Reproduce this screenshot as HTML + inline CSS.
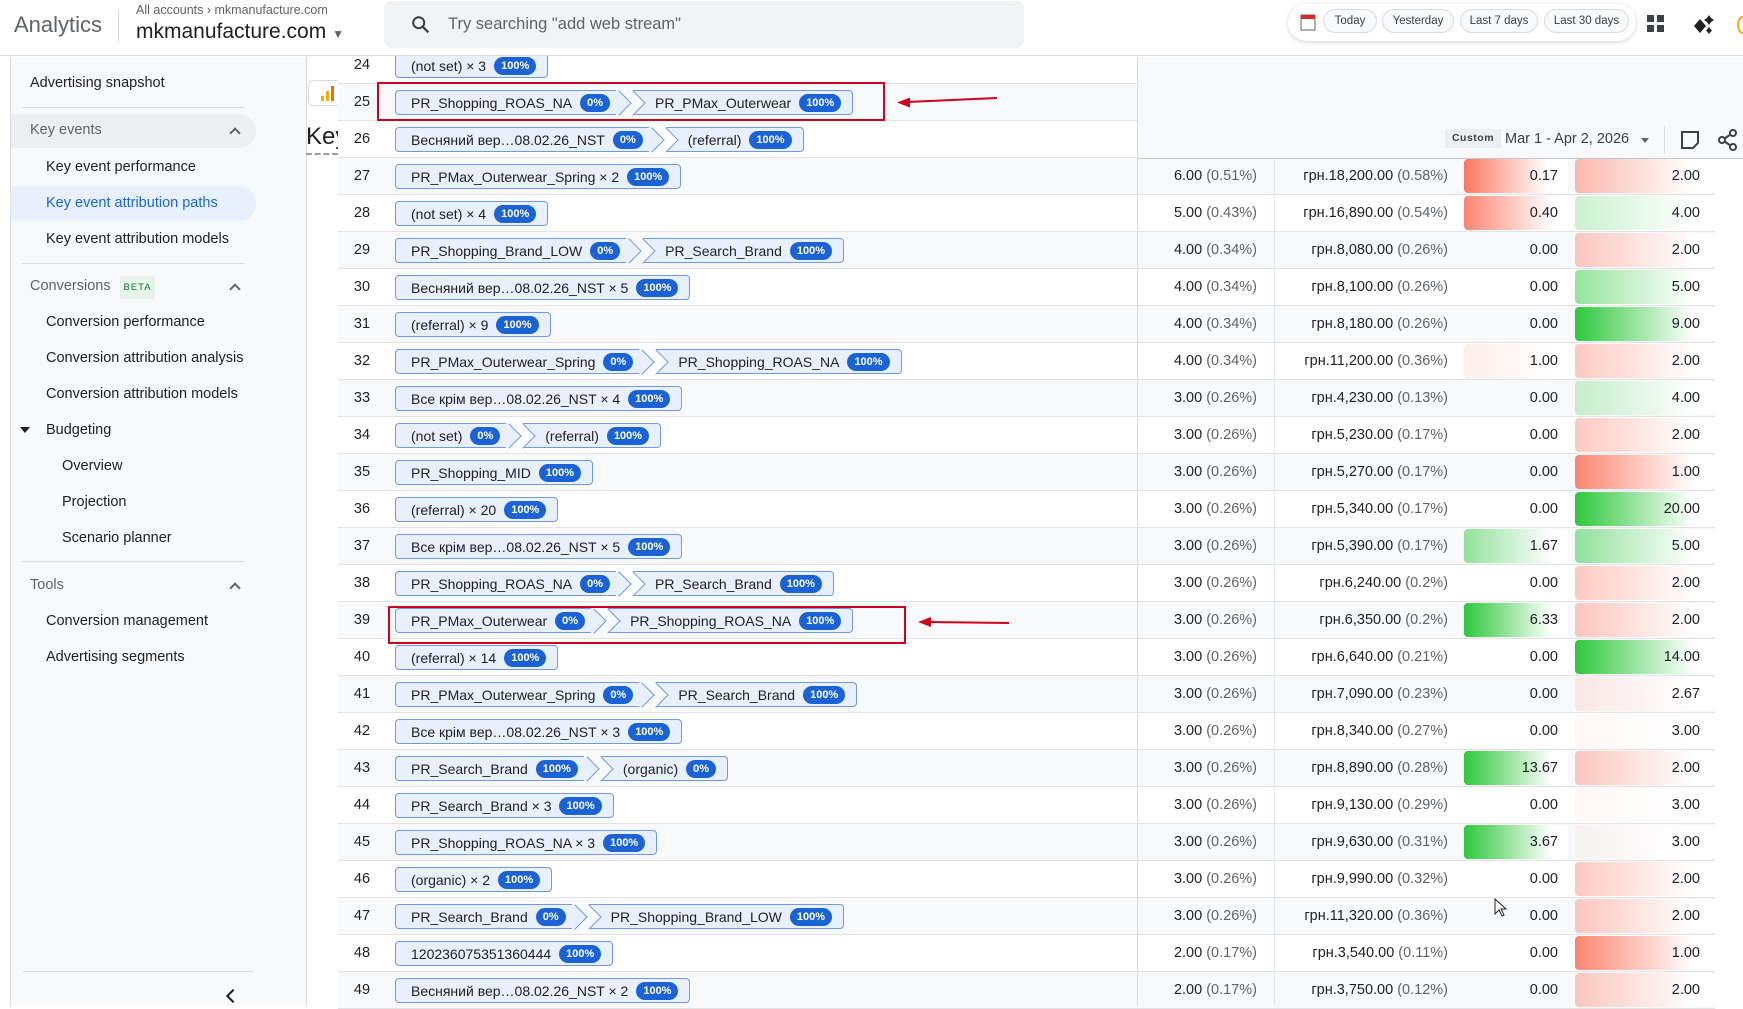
<!DOCTYPE html>
<html><head><meta charset="utf-8">
<style>
*{box-sizing:border-box;margin:0;padding:0}
body{width:1743px;height:1006px;overflow:hidden;position:relative;background:#fff;font-family:"Liberation Sans","Noto Sans CJK SC",sans-serif;color:#202124}
.abs{position:absolute}
#top{left:0;top:0;width:1743px;height:56px;background:#fff;border-bottom:1px solid #dadce0;z-index:5}
#side{left:10px;top:57px;width:297px;height:949px;background:#f8f9fa;border-left:1px solid #dadce0;border-right:1px solid #dadce0}
.si{position:absolute;font-size:14.5px;color:#202124;white-space:nowrap}
.sep{position:absolute;height:1px;background:#dadce0}
.chev{position:absolute;width:8px;height:8px;border-left:2px solid #5f6368;border-top:2px solid #5f6368;transform:rotate(45deg)}
.r{position:absolute;left:338px;width:1377px;height:37px;border-bottom:1px solid #e3e3e3;font-size:14.5px}
.r.g{background:#f8f9fa}
.n{position:absolute;left:0;width:48px;text-align:center;line-height:36px}
.p{position:absolute;left:57px;top:6px;height:25px;display:flex;white-space:nowrap}
.c{position:relative;display:inline-flex;align-items:center;height:25px;border:1px solid #6e9be6;background:#e8f0fe;border-radius:4px;padding:0 11px 0 15px;font-size:14px;color:#202124;white-space:nowrap}
.b{background:#1b62d4;color:#fff;font-weight:bold;font-size:11px;border-radius:10px;padding:2px 7px;margin-left:8px;line-height:14px;position:relative;z-index:2}
.f{border-right:none;border-radius:4px 0 0 4px;padding-right:6px}
.f::after{content:'';position:absolute;right:-12px;top:3px;width:17px;height:17px;transform:rotate(45deg);border-top:1px solid #6e9be6;border-right:1px solid #6e9be6;background:#e8f0fe;z-index:1}
.l{border-left:none;padding-left:22px;margin-left:17px;border-radius:0 4px 4px 0}
.l::before{content:'';position:absolute;left:-9px;top:3px;width:17px;height:17px;transform:rotate(45deg);border-top:1px solid #6e9be6;border-right:1px solid #6e9be6;background:#fff}
.g .l::before{background:#f8f9fa}
.v1,.v2{position:absolute;line-height:36px;white-space:nowrap}
.v1{right:458px}.v2{right:267px}
.q{color:#5f6368}
.h3,.h4{position:absolute;top:1px;height:34px;border-radius:4px;text-align:right;line-height:34px}
.h3{left:1126px;width:104px;padding-right:10px}
.h4{left:1237px;width:140px;padding-right:15px}
.pill{position:absolute;top:9px;height:24px;border:1px solid #dadce0;border-radius:12px;font-size:11.5px;color:#3c4043;text-align:center;line-height:22px;background:#f8f9fa}
</style></head><body>

<div id="top" class="abs">
  <div class="abs" style="left:14px;top:12px;font-size:22px;color:#5f6368">Analytics</div>
  <div class="abs" style="left:118px;top:9px;width:1px;height:34px;background:#dadce0"></div>
  <div class="abs" style="left:136px;top:3px;font-size:12.5px;color:#5f6368">All accounts › mkmanufacture.com</div>
  <div class="abs" style="left:136px;top:20px;font-size:21px;color:#202124">mkmanufacture.com <span style="font-size:12px;color:#5f6368">▼</span></div>
  <div class="abs" style="left:384px;top:1px;width:640px;height:47px;background:#f1f3f4;border-radius:8px">
    <svg class="abs" style="left:26px;top:13px" width="22" height="22" viewBox="0 0 24 24"><circle cx="9.5" cy="9.5" r="6" fill="none" stroke="#3c4043" stroke-width="2.2"/><path d="M14 14l6 6" stroke="#3c4043" stroke-width="2.4"/></svg>
    <div class="abs" style="left:64px;top:14px;font-size:16.5px;color:#5f6368">Try searching "add web stream"</div>
  </div>
  <div class="abs" style="left:1288px;top:4px;width:348px;height:37px;background:#fff;border-radius:19px;box-shadow:0 1px 4px rgba(0,0,0,.18)">
    <svg class="abs" style="left:12px;top:10px" width="16" height="17" viewBox="0 0 16 17"><rect x="1" y="1" width="14" height="15" fill="#fff" stroke="#5f6368"/><rect x="1" y="1" width="14" height="4" fill="#d93025"/></svg>
  </div>
  <div class="pill" style="left:1323px;width:54px;z-index:6">Today</div>
  <div class="pill" style="left:1382px;width:72px;z-index:6">Yesterday</div>
  <div class="pill" style="left:1460px;width:78px;z-index:6">Last 7 days</div>
  <div class="pill" style="left:1544px;width:85px;z-index:6">Last 30 days</div>
  <svg class="abs" style="left:1647px;top:15px" width="18" height="18" viewBox="0 0 18 18" fill="#3c4043"><rect x="0" y="0" width="7" height="7"/><rect x="10" y="0" width="7" height="7"/><rect x="0" y="10" width="7" height="7"/><rect x="10" y="10" width="7" height="7"/></svg>
  <svg class="abs" style="left:1692px;top:13px" width="24" height="24" viewBox="0 0 24 24" fill="#202124"><path d="M8 6l6 7-6 7-6-7z"/><path d="M17 2l2 3 3 2-3 2-2 3-2-3-3-2 3-2z"/><path d="M17 16l1.5 2 1.5 1.5-1.5 1.5-1.5 2-1.5-2-1.5-1.5 1.5-1.5z" transform="translate(0,-2)"/></svg>
  <div class="abs" style="left:1737px;top:16px;width:12px;height:18px;border:2px solid #f9ab00;border-radius:50%"></div>
</div>

<div id="side" class="abs"></div>
<div class="si" style="left:30px;top:75px">Advertising snapshot</div>
<div class="sep" style="left:22px;top:107px;width:222px"></div>
<div class="abs" style="left:11px;top:114px;width:245px;height:34px;background:#eceef1;border-radius:0 17px 17px 0"></div>
<div class="si" style="left:30px;top:122px;color:#5f6368">Key events</div>
<div class="chev" style="left:231px;top:129px"></div>
<div class="si" style="left:46px;top:159px">Key event performance</div>
<div class="abs" style="left:11px;top:186px;width:245px;height:35px;background:#e8f0fe;border-radius:0 17px 17px 0"></div>
<div class="si" style="left:46px;top:195px;color:#1967d2">Key event attribution paths</div>
<div class="si" style="left:46px;top:231px">Key event attribution models</div>
<div class="sep" style="left:22px;top:263px;width:222px"></div>
<div class="si" style="left:30px;top:278px;color:#5f6368">Conversions</div>
<div class="abs" style="left:120px;top:276px;width:35px;height:23px;background:#e6f4ea;color:#137333;font-size:9.5px;letter-spacing:1px;text-align:center;line-height:23px">BETA</div>
<div class="chev" style="left:231px;top:285px"></div>
<div class="si" style="left:46px;top:314px">Conversion performance</div>
<div class="si" style="left:46px;top:350px">Conversion attribution analysis</div>
<div class="si" style="left:46px;top:386px">Conversion attribution models</div>
<div class="abs" style="left:20px;top:427px;width:0;height:0;border-left:5px solid transparent;border-right:5px solid transparent;border-top:6px solid #202124"></div>
<div class="si" style="left:46px;top:422px">Budgeting</div>
<div class="si" style="left:62px;top:458px">Overview</div>
<div class="si" style="left:62px;top:494px">Projection</div>
<div class="si" style="left:62px;top:530px">Scenario planner</div>
<div class="sep" style="left:22px;top:561px;width:222px"></div>
<div class="si" style="left:30px;top:577px;color:#5f6368">Tools</div>
<div class="chev" style="left:231px;top:584px"></div>
<div class="si" style="left:46px;top:613px">Conversion management</div>
<div class="si" style="left:46px;top:649px">Advertising segments</div>
<div class="sep" style="left:23px;top:971px;width:230px"></div>
<div class="abs" style="left:228px;top:991px;width:10px;height:10px;border-left:2.5px solid #202124;border-bottom:2.5px solid #202124;transform:rotate(45deg)"></div>

<div class="abs" style="left:308px;top:57px;width:30px;height:949px;background:#fff"></div>
<div class="abs" style="left:308px;top:80px;width:30px;height:26px;border:1px solid #dadce0;border-right:none;border-radius:6px 0 0 6px;background:#fff">
 <svg class="abs" style="left:12px;top:5px" width="16" height="15" viewBox="0 0 16 15"><rect x="0" y="10" width="3" height="5" fill="#f9ab00"/><rect x="5" y="5" width="3" height="10" fill="#f9ab00"/><rect x="10" y="0" width="3" height="15" fill="#e37400"/></svg>
</div>
<div class="abs" style="left:306px;top:123px;font-size:24px;color:#202124;width:32px;overflow:hidden;white-space:nowrap">Key</div>
<div class="abs" style="left:306px;top:153px;width:32px;border-top:2px dashed #9aa0a6"></div>

<!-- rows -->
<div class="r" style="top:47px"><div class="n">24</div><div class="p"><span class="c">(not set) × 3<span class="b">100%</span></span></div></div>
<div class="r g" style="top:84px"><div class="n">25</div><div class="p"><span class="c f">PR_Shopping_ROAS_NA<span class="b">0%</span></span><span class="c l">PR_PMax_Outerwear<span class="b">100%</span></span></div></div>
<div class="r" style="top:121px"><div class="n">26</div><div class="p"><span class="c f">Весняний вер…08.02.26_NST<span class="b">0%</span></span><span class="c l">(referral)<span class="b">100%</span></span></div></div>
<div class="r g" style="top:158px"><div class="n">27</div><div class="p"><span class="c">PR_PMax_Outerwear_Spring × 2<span class="b">100%</span></span></div><div class="v1">6.00 <span class="q">(0.51%)</span></div><div class="v2">грн.18,200.00 <span class="q">(0.58%)</span></div><div class="h3" style="background:linear-gradient(90deg,rgb(250,120,98),#fff 80%)">0.17</div><div class="h4" style="background:linear-gradient(90deg,rgba(250,120,98,.5),#fff 85%)">2.00</div></div>
<div class="r" style="top:195px"><div class="n">28</div><div class="p"><span class="c">(not set) × 4<span class="b">100%</span></span></div><div class="v1">5.00 <span class="q">(0.43%)</span></div><div class="v2">грн.16,890.00 <span class="q">(0.54%)</span></div><div class="h3" style="background:linear-gradient(90deg,rgba(250,120,98,.9),#fff 85%)">0.40</div><div class="h4" style="background:linear-gradient(90deg,rgba(46,200,60,.25),#fff 85%)">4.00</div></div>
<div class="r g" style="top:232px"><div class="n">29</div><div class="p"><span class="c f">PR_Shopping_Brand_LOW<span class="b">0%</span></span><span class="c l">PR_Search_Brand<span class="b">100%</span></span></div><div class="v1">4.00 <span class="q">(0.34%)</span></div><div class="v2">грн.8,080.00 <span class="q">(0.26%)</span></div><div class="h3">0.00</div><div class="h4" style="background:linear-gradient(90deg,rgba(250,120,98,.4),#fff 85%)">2.00</div></div>
<div class="r" style="top:269px"><div class="n">30</div><div class="p"><span class="c">Весняний вер…08.02.26_NST × 5<span class="b">100%</span></span></div><div class="v1">4.00 <span class="q">(0.34%)</span></div><div class="v2">грн.8,100.00 <span class="q">(0.26%)</span></div><div class="h3">0.00</div><div class="h4" style="background:linear-gradient(90deg,rgba(46,200,60,.5),#fff 85%)">5.00</div></div>
<div class="r g" style="top:306px"><div class="n">31</div><div class="p"><span class="c">(referral) × 9<span class="b">100%</span></span></div><div class="v1">4.00 <span class="q">(0.34%)</span></div><div class="v2">грн.8,180.00 <span class="q">(0.26%)</span></div><div class="h3">0.00</div><div class="h4" style="background:linear-gradient(90deg,rgb(46,200,60),#fff 85%)">9.00</div></div>
<div class="r" style="top:343px"><div class="n">32</div><div class="p"><span class="c f">PR_PMax_Outerwear_Spring<span class="b">0%</span></span><span class="c l">PR_Shopping_ROAS_NA<span class="b">100%</span></span></div><div class="v1">4.00 <span class="q">(0.34%)</span></div><div class="v2">грн.11,200.00 <span class="q">(0.36%)</span></div><div class="h3" style="background:linear-gradient(90deg,rgba(250,120,98,.12),#fff 85%)">1.00</div><div class="h4" style="background:linear-gradient(90deg,rgba(250,120,98,.4),#fff 85%)">2.00</div></div>
<div class="r g" style="top:380px"><div class="n">33</div><div class="p"><span class="c">Все крім вер…08.02.26_NST × 4<span class="b">100%</span></span></div><div class="v1">3.00 <span class="q">(0.26%)</span></div><div class="v2">грн.4,230.00 <span class="q">(0.13%)</span></div><div class="h3">0.00</div><div class="h4" style="background:linear-gradient(90deg,rgba(46,200,60,.25),#fff 85%)">4.00</div></div>
<div class="r" style="top:417px"><div class="n">34</div><div class="p"><span class="c f">(not set)<span class="b">0%</span></span><span class="c l">(referral)<span class="b">100%</span></span></div><div class="v1">3.00 <span class="q">(0.26%)</span></div><div class="v2">грн.5,230.00 <span class="q">(0.17%)</span></div><div class="h3">0.00</div><div class="h4" style="background:linear-gradient(90deg,rgba(250,120,98,.4),#fff 85%)">2.00</div></div>
<div class="r g" style="top:454px"><div class="n">35</div><div class="p"><span class="c">PR_Shopping_MID<span class="b">100%</span></span></div><div class="v1">3.00 <span class="q">(0.26%)</span></div><div class="v2">грн.5,270.00 <span class="q">(0.17%)</span></div><div class="h3">0.00</div><div class="h4" style="background:linear-gradient(90deg,rgba(250,120,98,.9),#fff 85%)">1.00</div></div>
<div class="r" style="top:491px"><div class="n">36</div><div class="p"><span class="c">(referral) × 20<span class="b">100%</span></span></div><div class="v1">3.00 <span class="q">(0.26%)</span></div><div class="v2">грн.5,340.00 <span class="q">(0.17%)</span></div><div class="h3">0.00</div><div class="h4" style="background:linear-gradient(90deg,rgb(46,200,60),#fff 85%)">20.00</div></div>
<div class="r g" style="top:528px"><div class="n">37</div><div class="p"><span class="c">Все крім вер…08.02.26_NST × 5<span class="b">100%</span></span></div><div class="v1">3.00 <span class="q">(0.26%)</span></div><div class="v2">грн.5,390.00 <span class="q">(0.17%)</span></div><div class="h3" style="background:linear-gradient(90deg,rgba(46,200,60,.5),#fff 85%)">1.67</div><div class="h4" style="background:linear-gradient(90deg,rgba(46,200,60,.5),#fff 85%)">5.00</div></div>
<div class="r" style="top:565px"><div class="n">38</div><div class="p"><span class="c f">PR_Shopping_ROAS_NA<span class="b">0%</span></span><span class="c l">PR_Search_Brand<span class="b">100%</span></span></div><div class="v1">3.00 <span class="q">(0.26%)</span></div><div class="v2">грн.6,240.00 <span class="q">(0.2%)</span></div><div class="h3">0.00</div><div class="h4" style="background:linear-gradient(90deg,rgba(250,120,98,.4),#fff 85%)">2.00</div></div>
<div class="r g" style="top:602px"><div class="n">39</div><div class="p"><span class="c f">PR_PMax_Outerwear<span class="b">0%</span></span><span class="c l">PR_Shopping_ROAS_NA<span class="b">100%</span></span></div><div class="v1">3.00 <span class="q">(0.26%)</span></div><div class="v2">грн.6,350.00 <span class="q">(0.2%)</span></div><div class="h3" style="background:linear-gradient(90deg,rgb(46,200,60),#fff 85%)">6.33</div><div class="h4" style="background:linear-gradient(90deg,rgba(250,120,98,.4),#fff 85%)">2.00</div></div>
<div class="r" style="top:639px"><div class="n">40</div><div class="p"><span class="c">(referral) × 14<span class="b">100%</span></span></div><div class="v1">3.00 <span class="q">(0.26%)</span></div><div class="v2">грн.6,640.00 <span class="q">(0.21%)</span></div><div class="h3">0.00</div><div class="h4" style="background:linear-gradient(90deg,rgb(46,200,60),#fff 85%)">14.00</div></div>
<div class="r g" style="top:676px"><div class="n">41</div><div class="p"><span class="c f">PR_PMax_Outerwear_Spring<span class="b">0%</span></span><span class="c l">PR_Search_Brand<span class="b">100%</span></span></div><div class="v1">3.00 <span class="q">(0.26%)</span></div><div class="v2">грн.7,090.00 <span class="q">(0.23%)</span></div><div class="h3">0.00</div><div class="h4" style="background:linear-gradient(90deg,rgba(250,120,98,.14),#fff 85%)">2.67</div></div>
<div class="r" style="top:713px"><div class="n">42</div><div class="p"><span class="c">Все крім вер…08.02.26_NST × 3<span class="b">100%</span></span></div><div class="v1">3.00 <span class="q">(0.26%)</span></div><div class="v2">грн.8,340.00 <span class="q">(0.27%)</span></div><div class="h3">0.00</div><div class="h4" style="background:linear-gradient(90deg,rgba(250,120,98,.05),#fff 85%)">3.00</div></div>
<div class="r g" style="top:750px"><div class="n">43</div><div class="p"><span class="c f">PR_Search_Brand<span class="b">100%</span></span><span class="c l">(organic)<span class="b">0%</span></span></div><div class="v1">3.00 <span class="q">(0.26%)</span></div><div class="v2">грн.8,890.00 <span class="q">(0.28%)</span></div><div class="h3" style="background:linear-gradient(90deg,rgb(46,200,60),#fff 85%)">13.67</div><div class="h4" style="background:linear-gradient(90deg,rgba(250,120,98,.4),#fff 85%)">2.00</div></div>
<div class="r" style="top:787px"><div class="n">44</div><div class="p"><span class="c">PR_Search_Brand × 3<span class="b">100%</span></span></div><div class="v1">3.00 <span class="q">(0.26%)</span></div><div class="v2">грн.9,130.00 <span class="q">(0.29%)</span></div><div class="h3">0.00</div><div class="h4" style="background:linear-gradient(90deg,rgba(250,120,98,.05),#fff 85%)">3.00</div></div>
<div class="r g" style="top:824px"><div class="n">45</div><div class="p"><span class="c">PR_Shopping_ROAS_NA × 3<span class="b">100%</span></span></div><div class="v1">3.00 <span class="q">(0.26%)</span></div><div class="v2">грн.9,630.00 <span class="q">(0.31%)</span></div><div class="h3" style="background:linear-gradient(90deg,rgb(46,200,60),#fff 85%)">3.67</div><div class="h4" style="background:linear-gradient(90deg,rgba(250,120,98,.05),#fff 85%)">3.00</div></div>
<div class="r" style="top:861px"><div class="n">46</div><div class="p"><span class="c">(organic) × 2<span class="b">100%</span></span></div><div class="v1">3.00 <span class="q">(0.26%)</span></div><div class="v2">грн.9,990.00 <span class="q">(0.32%)</span></div><div class="h3">0.00</div><div class="h4" style="background:linear-gradient(90deg,rgba(250,120,98,.4),#fff 85%)">2.00</div></div>
<div class="r g" style="top:898px"><div class="n">47</div><div class="p"><span class="c f">PR_Search_Brand<span class="b">0%</span></span><span class="c l">PR_Shopping_Brand_LOW<span class="b">100%</span></span></div><div class="v1">3.00 <span class="q">(0.26%)</span></div><div class="v2">грн.11,320.00 <span class="q">(0.36%)</span></div><div class="h3">0.00</div><div class="h4" style="background:linear-gradient(90deg,rgba(250,120,98,.4),#fff 85%)">2.00</div></div>
<div class="r" style="top:935px"><div class="n">48</div><div class="p"><span class="c">120236075351360444<span class="b">100%</span></span></div><div class="v1">2.00 <span class="q">(0.17%)</span></div><div class="v2">грн.3,540.00 <span class="q">(0.11%)</span></div><div class="h3">0.00</div><div class="h4" style="background:linear-gradient(90deg,rgba(250,120,98,.9),#fff 85%)">1.00</div></div>
<div class="r g" style="top:972px"><div class="n">49</div><div class="p"><span class="c">Весняний вер…08.02.26_NST × 2<span class="b">100%</span></span></div><div class="v1">2.00 <span class="q">(0.17%)</span></div><div class="v2">грн.3,750.00 <span class="q">(0.12%)</span></div><div class="h3">0.00</div><div class="h4" style="background:linear-gradient(90deg,rgba(250,120,98,.4),#fff 85%)">2.00</div></div>

<!-- column lines -->
<div class="abs" style="left:1137px;top:57px;width:1px;height:949px;background:#dadce0;z-index:3"></div>
<div class="abs" style="left:1274px;top:159px;width:1px;height:847px;background:#e3e6f5;z-index:3"></div>

<!-- right header panel -->
<div class="abs" style="left:1138px;top:57px;width:605px;height:102px;background:#f8f9fa;border-bottom:1px solid #c4c7cc;z-index:4">
  <div class="abs" style="left:307px;top:72px;width:56px;height:19px;background:#eceef1;font-size:10.5px;font-weight:bold;color:#3c4043;text-align:center;line-height:19px;letter-spacing:.5px">Custom</div>
  <div class="abs" style="left:367px;top:74px;font-size:14.5px;color:#3c4043">Mar 1 - Apr 2, 2026</div>
  <div class="abs" style="left:503px;top:81px;border-left:4px solid transparent;border-right:4px solid transparent;border-top:5px solid #5f6368"></div>
  <div class="abs" style="left:526px;top:69px;width:1px;height:28px;background:#dadce0"></div>
  <svg class="abs" style="left:542px;top:73px" width="20" height="20" viewBox="0 0 20 20"><path d="M2 2h16v11l-5 5H2z" fill="none" stroke="#3c4043" stroke-width="2"/></svg>
  <svg class="abs" style="left:580px;top:72px" width="20" height="22" viewBox="0 0 20 22"><circle cx="15" cy="4" r="3" fill="none" stroke="#3c4043" stroke-width="2"/><circle cx="4" cy="11" r="3" fill="none" stroke="#3c4043" stroke-width="2"/><circle cx="15" cy="18" r="3" fill="none" stroke="#3c4043" stroke-width="2"/><path d="M6.5 9.5l6-4M6.5 12.5l6 4" stroke="#3c4043" stroke-width="2"/></svg>
</div>

<!-- annotations -->
<div class="abs" style="left:377px;top:82px;width:508px;height:39px;border:2.5px solid #d0021b;z-index:6"></div>
<svg class="abs" style="left:895px;top:93px;z-index:6" width="105" height="16" viewBox="0 0 105 16"><path d="M102 5L12 9" stroke="#d0021b" stroke-width="2"/><path d="M2 9.5l13-5v10z" fill="#d0021b"/></svg>
<div class="abs" style="left:388px;top:606px;width:518px;height:38px;border:2.5px solid #d0021b;z-index:6"></div>
<svg class="abs" style="left:916px;top:614px;z-index:6" width="95" height="16" viewBox="0 0 95 16"><path d="M93 9L12 8" stroke="#d0021b" stroke-width="2"/><path d="M2 8l13-5v10z" fill="#d0021b"/></svg>
<svg class="abs" style="left:1494px;top:898px;z-index:6" width="14" height="20" viewBox="0 0 14 20"><path d="M1 1v15l4-4 3 6 2-1-3-6h5z" fill="#fff" stroke="#202124"/></svg>
</body></html>
